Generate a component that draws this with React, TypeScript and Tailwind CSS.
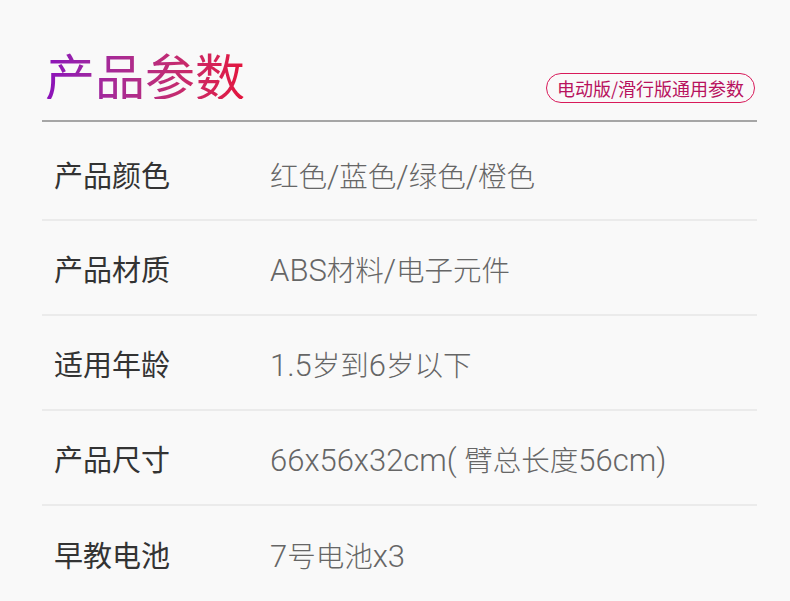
import React from "react";

const rows: [string, string][] = [
  ["产品颜色", "红色/蓝色/绿色/橙色"],
  ["产品材质", "ABS材料/电子元件"],
  ["适用年龄", "1.5岁到6岁以下"],
  ["产品尺寸", "66x56x32cm( 臂总长度56cm)"],
  ["早教电池", "7号电池x3"],
];

function Value({ text }: { text: string }) {
  const parts = text.split(/([\x00-\x7F]+)/).filter((p) => p.length > 0);
  return (
    <div className="text-[#666666] font-light text-[28.5px]">
      {parts.map((p, i) =>
        /^[\x00-\x7F]+$/.test(p) ? (
          <span
            key={i}
            className="text-[31px] whitespace-pre"
            style={{ fontFamily: 'Roboto, "Noto Sans CJK SC", sans-serif' }}
          >
            {p}
          </span>
        ) : (
          <span key={i}>{p}</span>
        )
      )}
    </div>
  );
}

export default function App() {
  return (
    <div
      className="w-[790px] h-[601px] bg-[#f9f9f9] overflow-hidden pl-[42px] pr-[33px]"
      style={{ fontFamily: '"Noto Sans CJK SC", "Noto Sans", sans-serif' }}
    >
      <div className="h-[122px] flex justify-between items-start border-b-2 border-[#a6a6a6]">
        <div className="mt-[49px] text-[50px] leading-none pl-[3px] bg-gradient-to-r from-[#8a0cbc] to-[#e4123a] bg-clip-text text-transparent">
          产品参数
        </div>
        <div className="mt-[73px] mr-[2px] h-[30px] px-[10px] flex items-center rounded-full border-[1.5px] border-[#d81a5a] text-[18px] leading-none text-[#b8125e]">
          电动版/滑行版通用参数
        </div>
      </div>
      {rows.map(([k, v], i) => (
        <div
          key={k}
          className={
            "flex items-center leading-none " +
            (i === 0 ? "h-[99px] pt-[10px] " : "h-[95px] pt-[5px] ") +
            (i < rows.length - 1 ? "border-b-2 border-[#ebebeb]" : "")
          }
        >
          <div className="flex items-baseline">
            <div className="w-[228px] pl-[12px] text-[29px] text-[#333333]">{k}</div>
            <Value text={v} />
          </div>
        </div>
      ))}
    </div>
  );
}
